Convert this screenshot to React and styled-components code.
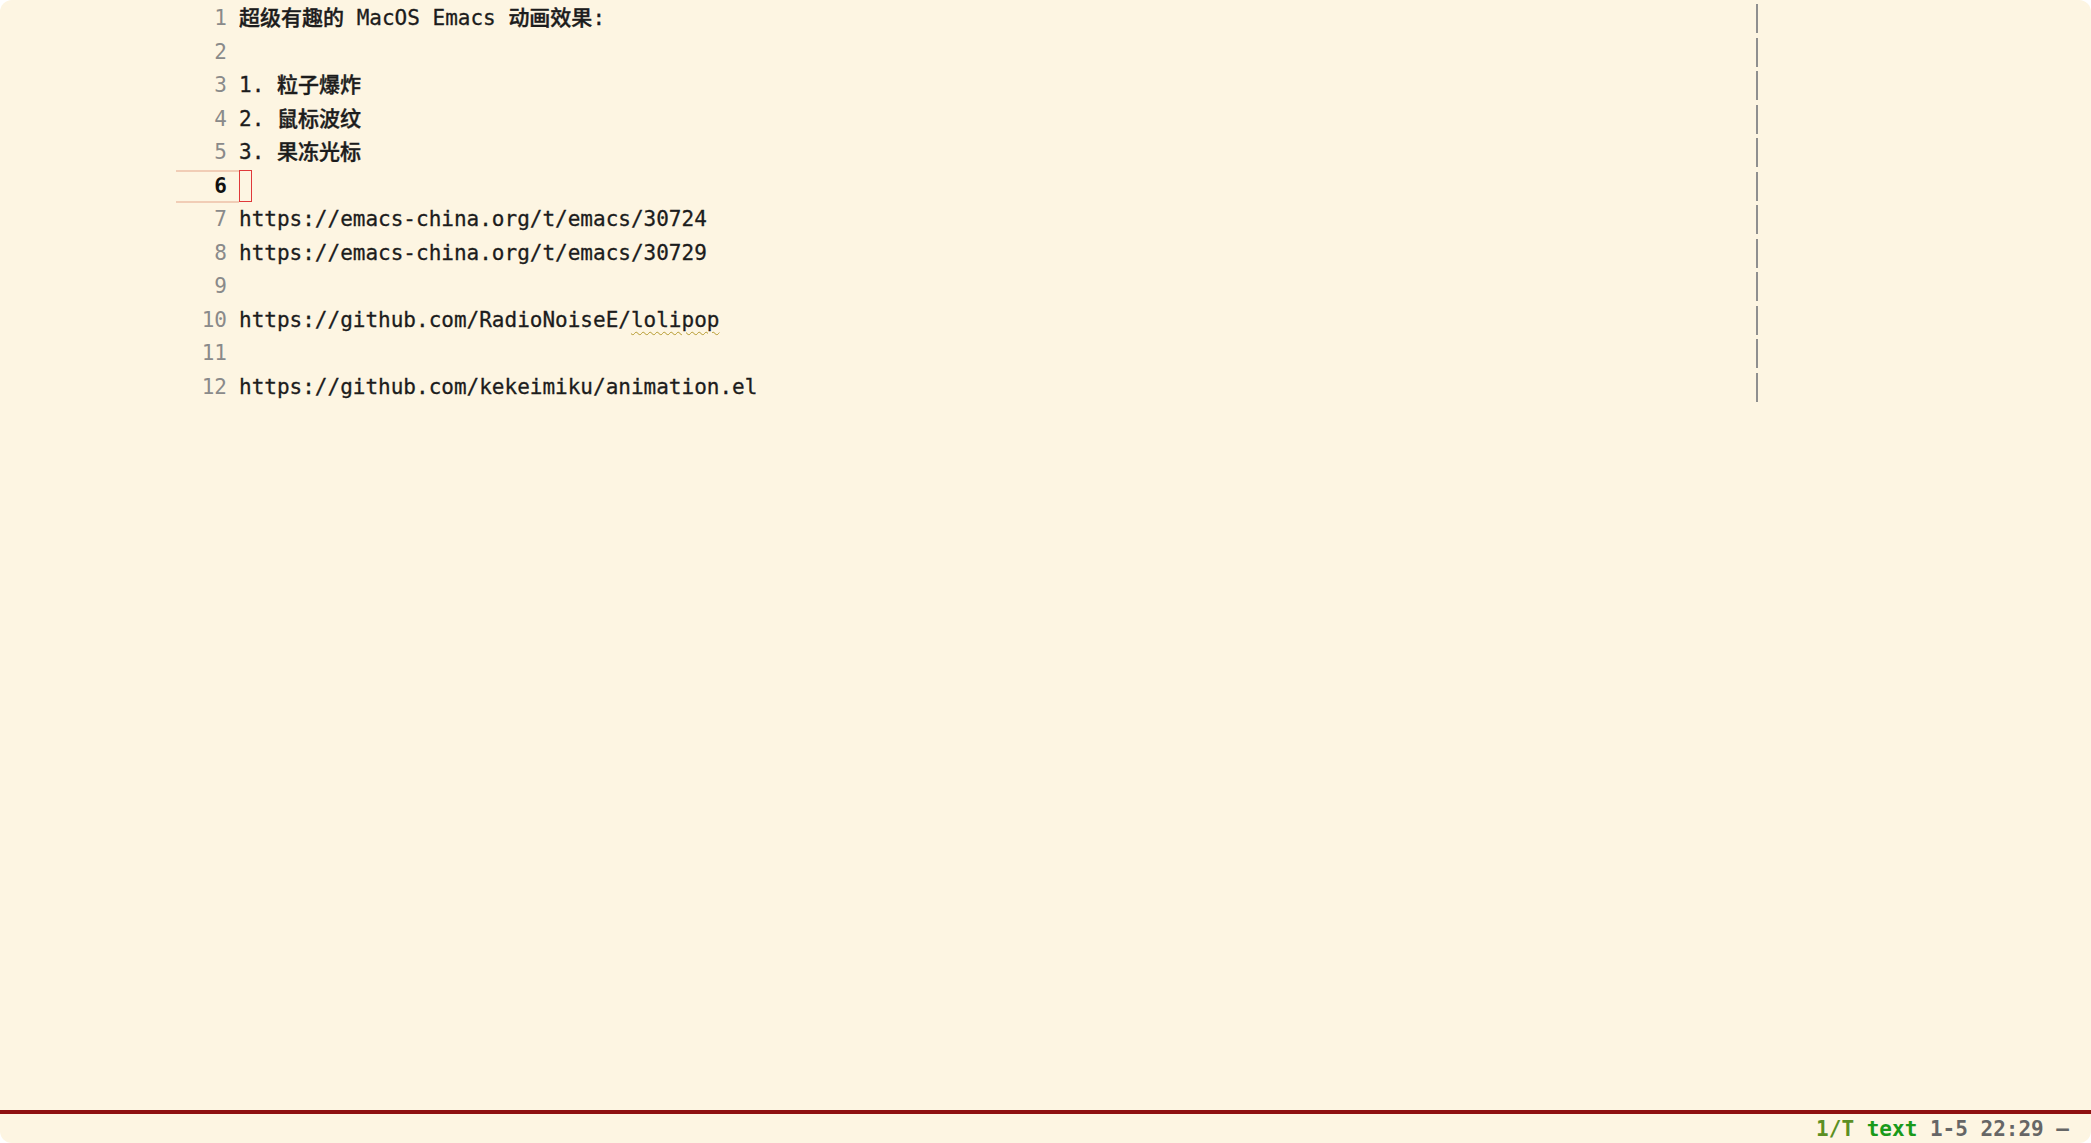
import React from "react";
import styled, { createGlobalStyle } from "styled-components";

const Global = createGlobalStyle`
  html, body { margin: 0; padding: 0; background: #ffffff; }
  body { font-family: "DejaVu Sans Mono", "Noto Sans CJK SC", monospace; }
`;

const Window = styled.div`
  height: 100vh;
  display: flex;
  flex-direction: column;
  background: #fdf5e2;
  border-radius: 12px;
  overflow: hidden;
  font-family: "DejaVu Sans Mono", "Noto Sans CJK SC", monospace;
  font-size: 21px;
  color: #1c1c1c;
`;

const Editor = styled.div`
  flex: 1;
  padding-top: 2px;
  display: flex;
  flex-direction: column;
`;

const Row = styled.div`
  display: flex;
  align-items: stretch;
  height: 33.5px;
`;

const Gutter = styled.div`
  margin-left: 176px;
  width: 63px;
  box-sizing: border-box;
  padding-right: 12px;
  text-align: right;
  line-height: 33.5px;
  color: ${(p) => (p.$current ? "#111" : "#8a8a8a")};
  font-weight: ${(p) => (p.$current ? 700 : 400)};
  ${(p) =>
    p.$current &&
    `
    border-top: 2px solid #f1cdb6;
    border-bottom: 2px solid #f1cdb6;
    line-height: 29.5px;
  `}
`;

const Text = styled.div`
  width: 1517px;
  white-space: pre;
  line-height: 33.5px;
  overflow: hidden;
  -webkit-text-stroke: 0.3px #1c1c1c;
`;

const Cjk = styled.span`
  font-family: "Noto Sans CJK SC", sans-serif;
  font-weight: 500;
  line-height: 1;
  -webkit-text-stroke: 0.4px #1c1c1c;
`;

const Squiggle = styled.span`
  text-decoration: underline wavy #b59a2e;
  text-decoration-thickness: 1px;
  text-underline-offset: 4px;
`;

const Cursor = styled.span`
  display: inline-block;
  vertical-align: top;
  margin-top: 0.5px;
  width: 13px;
  height: 32px;
  box-sizing: border-box;
  border: 1.5px solid #e0393a;
`;

const FillBar = styled.div`
  width: 2px;
  align-self: center;
  height: 29px;
  background: #8f8f8f;
`;

const ModeLine = styled.div`
  height: 29px;
  border-top: 4px solid #8e1010;
  display: flex;
  align-items: center;
  justify-content: flex-end;
  padding-right: 22px;
  font-weight: 700;
  color: #666666;
`;

const ModeText = styled.span`
  white-space: pre;
`;

const Seg = styled.span`
  color: ${(p) => p.$color || "#666666"};
`;

const lines = [
  <>
    <Cjk>超级有趣的</Cjk> MacOS Emacs <Cjk>动画效果</Cjk>:
  </>,
  null,
  <>
    1. <Cjk>粒子爆炸</Cjk>
  </>,
  <>
    2. <Cjk>鼠标波纹</Cjk>
  </>,
  <>
    3. <Cjk>果冻光标</Cjk>
  </>,
  "cursor",
  "https://emacs-china.org/t/emacs/30724",
  "https://emacs-china.org/t/emacs/30729",
  null,
  <>
    https://github.com/RadioNoiseE/<Squiggle>lolipop</Squiggle>
  </>,
  null,
  "https://github.com/kekeimiku/animation.el",
];

export default function App() {
  return (
    <>
      <Global />
      <Window>
        <Editor>
          {lines.map((content, i) => {
            const current = content === "cursor";
            return (
              <Row key={i}>
                <Gutter $current={current}>{i + 1}</Gutter>
                <Text>{current ? <Cursor /> : content}</Text>
                <FillBar />
              </Row>
            );
          })}
        </Editor>
        <ModeLine>
          <ModeText>
            <Seg $color="#5b8f23">1/T</Seg>{" "}
            <Seg $color="#1a9a1a">text</Seg>{" 1-5 22:29 —"}
          </ModeText>
        </ModeLine>
      </Window>
    </>
  );
}
